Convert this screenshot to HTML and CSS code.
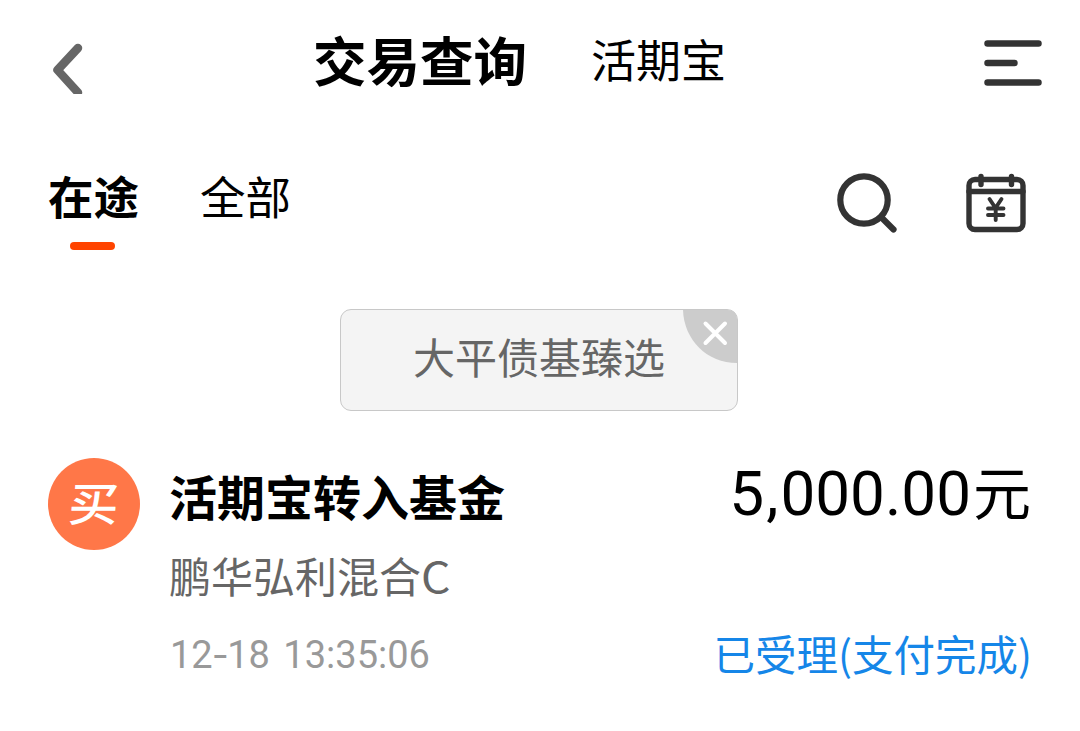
FILE: index.html
```
<!DOCTYPE html>
<html lang="zh-CN">
<head>
	<meta charset="UTF-8">
	<title>交易查询</title>
	<meta name="viewport" content="width=device-width, initial-scale=1">
	<link rel="stylesheet" href="styles.css">
</head>
<body>
	<header class="header">
		<svg class="back" width="32" height="52" viewBox="0 0 32 52"><path d="M27 6 L6.5 28 L27 50.5" fill="none" stroke="#666" stroke-width="8.5" stroke-linecap="round" stroke-linejoin="round"/></svg>
		<nav class="titles">
			<h1>交易查询</h1>
			<a>活期宝</a>
		</nav>
		<svg class="menu" width="60" height="48" viewBox="0 0 60 48"><path d="M4.5 4.5H55.5M4.5 24H31.5M4.5 43.5H55.5" stroke="#333" stroke-width="6.5" stroke-linecap="round"/></svg>
	</header>
	<div class="tabs">
		<a class="tab active">在途</a>
		<a class="tab">全部</a>
		<div class="tools">
			<svg width="62" height="62" viewBox="0 0 62 62" fill="none" stroke="#333" stroke-width="6.2"><circle cx="28" cy="28" r="23.7"/><path d="M45.5 45.5L57.5 57.5" stroke-linecap="round"/></svg>
			<svg width="60" height="62" viewBox="0 0 60 62" fill="none" stroke="#333" stroke-width="5.4" stroke-linecap="round" stroke-linejoin="round"><rect x="3" y="7.5" width="54" height="50" rx="6"/><path d="M3 19.5H57M15 4.5V12.5M45.5 4.5V12.5"/><path d="M23.5 27L29.5 36L35.5 27M22 36.5H37.5M22 43H37.5M29.7 36V48" stroke-width="3.9"/></svg>
		</div>
	</div>
	<div class="filter">
		<span class="chip">大平债基臻选
			<svg class="close" width="54" height="53" viewBox="0 0 54 53"><path d="M0 0H45Q54 0 54 9V53C24 53 1 30 0 0Z" fill="#ccc"/><path d="M22.5 13.5L42 33M42 13.5L22.5 33" stroke="#fff" stroke-width="4" stroke-linecap="round"/></svg>
		</span>
	</div>
	<section class="record">
		<div class="badge"><span>买</span></div>
		<div class="info">
			<div class="row">
				<h2>活期宝转入基金</h2>
				<div class="amount"><b>5,</b>000.00<span>元</span></div>
			</div>
			<div class="fund">鹏华弘利混合<span>C</span></div>
			<div class="row">
				<div class="time">12<i>-</i>18 13:35:06</div>
				<div class="status">已受理(支付完成)</div>
			</div>
		</div>
	</section>
</body>
</html>
```

FILE: styles.css
```
* {
	box-sizing: border-box;
}
body {
	margin: 0;
	background: #fff;
	color: #000;
	font-family: "Noto Sans CJK SC", sans-serif;
}
h1, h2 {
	margin: 0;
}
svg {
	display: block;
}
.header {
	display: flex;
	height: 148px;
	padding: 0 37px 0 51px;
}
.back {
	margin-top: 42px;
}
.menu {
	margin: 39px 0 0 auto;
}
.titles {
	display: flex;
	align-items: center;
	gap: 64px;
	height: 118px;
	margin-left: 230px;
}
.titles h1 {
	font-size: 53.5px;
	line-height: 80px;
}
.titles a {
	font-size: 45px;
	line-height: 76px;
}
.tabs {
	display: flex;
	gap: 61px;
	height: 161px;
	padding: 0 54px 0 48px;
}
.tab {
	height: 102px;
	font-size: 45.5px;
	line-height: 95px;
}
.active {
	display: flex;
	flex-direction: column;
	align-items: center;
	font-weight: bold;
}
.active::after {
	content: "";
	flex: none;
	width: 45px;
	height: 8px;
	margin: -1px 2px 0 0;
	border-radius: 4px;
	background: #ff4400;
}
.tools {
	display: flex;
	gap: 68px;
	margin: 24px 0 0 auto;
}
.filter {
	display: flex;
	justify-content: center;
	height: 149px;
	padding-right: 2px;
}
.chip {
	position: relative;
	width: 398px;
	height: 102px;
	padding-left: 72px;
	border: 1px solid #c8c8c8;
	border-radius: 11px;
	background: #f4f4f4;
	color: #666;
	font-size: 42px;
	line-height: 92px;
}
.close {
	position: absolute;
	top: 0;
	right: 0;
}
.record {
	display: flex;
	gap: 29px;
	padding: 0 49px 0 48px;
}
.badge {
	flex: none;
	width: 92px;
	height: 92px;
	border-radius: 50%;
	background: #ff7748;
	color: #fff;
	font-size: 50px;
	font-weight: 500;
	line-height: 87px;
	text-align: center;
}
.badge span {
	display: inline-block;
	transform: skewX(-4deg) scaleY(.92);
}
.info {
	flex: 1;
}
.row {
	display: flex;
	justify-content: space-between;
}
h2 {
	font-size: 48px;
	line-height: 74px;
}
.amount {
	height: 74px;
	font-family: Roboto, "Noto Sans CJK SC", sans-serif;
	font-size: 62px;
	line-height: 72px;
	white-space: nowrap;
}
.amount b {
	font-weight: normal;
	letter-spacing: 2px;
}
.amount span {
	margin-left: 2px;
	font-size: 58px;
}
.fund {
	margin: 1px 0;
	color: #666;
	font-size: 42px;
	line-height: 84px;
}
.fund span {
	display: inline-block;
	transform: scaleX(1.1);
	transform-origin: left;
}
.time {
	margin-top: 1px;
	padding-left: 1px;
	color: #999;
	font-family: Roboto, sans-serif;
	font-size: 38px;
	line-height: 72px;
	word-spacing: 4px;
}
.time i {
	display: inline-block;
	margin: 0 2px;
	font-style: normal;
	transform: scaleX(1.3);
}
.status {
	margin-right: -1px;
	color: #1586e8;
	font-size: 41.5px;
	line-height: 70px;
}
```
